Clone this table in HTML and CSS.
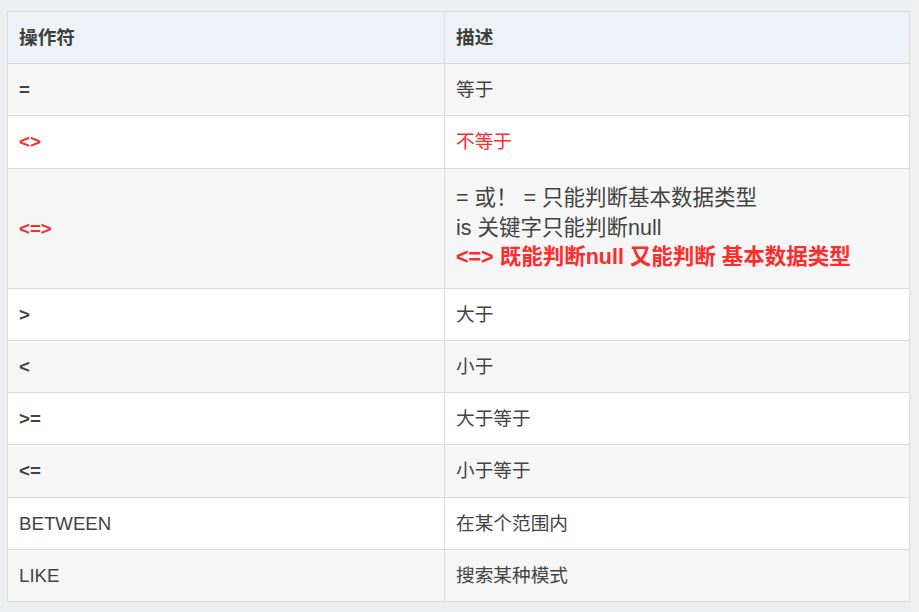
FILE: index.html
```html
<!DOCTYPE html>
<html lang="zh">
<head>
<meta charset="utf-8">
<title>运算符</title>
<link rel="stylesheet" href="styles.css">
</head>
<body>
<div class="page">
  <table class="ops">
    <thead>
      <tr><th class="c1">操作符</th><th>描述</th></tr>
    </thead>
    <tbody>
      <tr class="alt"><td><b>=</b></td><td>等于</td></tr>
      <tr class="x1"><td><b class="red">&lt;&gt;</b></td><td class="redtxt">不等于</td></tr>
      <tr class="alt tall"><td><b class="red">&lt;=&gt;</b></td><td class="multi">= 或！ = 只能判断基本数据类型<br>is 关键字只能判断null<br><b class="red">&lt;=&gt; 既能判断null 又能判断 基本数据类型</b></td></tr>
      <tr><td><b>&gt;</b></td><td>大于</td></tr>
      <tr class="alt"><td><b>&lt;</b></td><td>小于</td></tr>
      <tr><td><b>&gt;=</b></td><td>大于等于</td></tr>
      <tr class="alt x1"><td><b>&lt;=</b></td><td>小于等于</td></tr>
      <tr><td>BETWEEN</td><td>在某个范围内</td></tr>
      <tr class="alt"><td>LIKE</td><td>搜索某种模式</td></tr>
    </tbody>
  </table>
  <div class="strip"></div>
</div>
</body>
</html>
```

FILE: styles.css
```css
html, body {
  margin: 0;
  padding: 0;
  background: #eceef2;
}
.page {
  display: flex;
  align-items: flex-start;
  width: 919px;
  height: 612px;
  overflow: hidden;
  font-family: "Liberation Sans", "Noto Sans CJK SC", sans-serif;
  color: #434343;
}
.ops {
  margin: 11px 0 0 7px;
  width: 903px;
  flex: none;
  border-collapse: collapse;
  table-layout: fixed;
  font-size: 18.67px;
}
.strip {
  flex: 1;
  align-self: stretch;
  background: #efefef;
}
.ops th, .ops td {
  border: 1px solid #dcdcdc;
  padding: 0 11px;
  height: 52px;
  line-height: 30px;
  text-align: left;
  vertical-align: middle;
  box-sizing: border-box;
}
.ops th.c1 { width: 437px; }
.ops th {
  background: #eef2f6;
  font-weight: bold;
  color: #3e3e3e;
}
.ops tbody tr { background: #ffffff; }
.ops tbody tr.alt { background: #f6f6f6; }
.ops tr.x1 td { height: 53px; }
.ops b { font-weight: bold; }
.red { color: #ff2a2a; }
.redtxt { color: #ff2a2a; }
.ops tr.tall td { height: 120px; }
.ops td.multi {
  font-size: 21.5px;
  line-height: 29.5px;
}
```
